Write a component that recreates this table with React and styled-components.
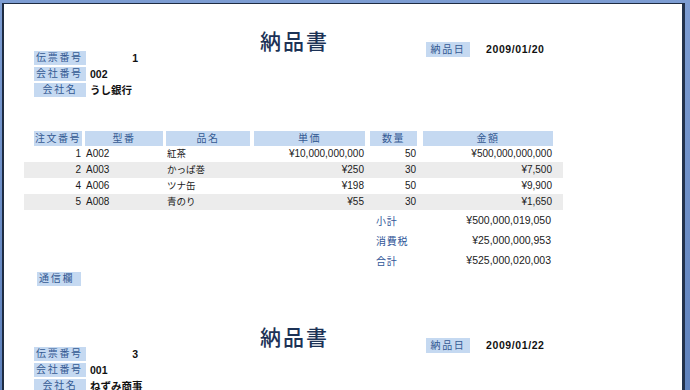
import React from "react";
import styled, { createGlobalStyle } from "styled-components";

const GlobalStyle = createGlobalStyle`
  html, body { margin: 0; padding: 0; }
  body {
    background: #6d8fc8;
    font-family: "Liberation Sans", "Noto Sans CJK JP", sans-serif;
    overflow: hidden;
  }
`;

const Frame = styled.div`
  height: 390px;
  box-sizing: border-box;
  padding: 3px 5px 0 2px;
  background: linear-gradient(#7d9dd3, #5f82bd);
`;

const Sheet = styled.div`
  height: 100%;
  box-sizing: border-box;
  background: #fff;
  border-left: 2px solid #1e2c42;
  border-top: 1px solid #1e2c42;
  border-right: 3px solid #22324c;
  overflow: hidden;
`;

const Section = styled.section`
  height: 296px;
  width: 539px;
  padding-left: 20px;
  display: flex;
  flex-direction: column;
`;

const Header = styled.div`
  display: grid;
  grid-template-columns: 200px 139px 200px;
  grid-template-rows: 47px auto;
`;

const Title = styled.h1`
  grid-column: 2;
  grid-row: 1;
  margin: 0;
  padding: 24px 0 0 2px;
  font: 500 21px/24px "Noto Sans CJK JP", sans-serif;
  letter-spacing: 2px;
  text-align: center;
  color: #1c3256;
  white-space: nowrap;
`;

const DateBlock = styled.div`
  grid-column: 3;
  grid-row: 1 / 3;
  align-self: start;
  margin: 38px 0 0 63px;
  display: flex;
  align-items: center;
  gap: 16px;
`;

const Label = styled.div`
  width: ${(p) => p.$w || 52}px;
  height: ${(p) => p.$h || 14}px;
  box-sizing: border-box;
  padding: ${(p) => (p.$align === "left" ? "0 0 0 2px" : "0")};
  background: #c5d9f1;
  color: #345a93;
  font-size: 10px;
  line-height: ${(p) => p.$h || 14}px;
  letter-spacing: 1.7px;
  text-align: ${(p) => p.$align || "center"};
  white-space: nowrap;
`;

const Value = styled.div`
  font-size: 10.5px;
  font-weight: 700;
  line-height: ${(p) => p.$h || 14}px;
  color: #111;
  letter-spacing: ${(p) => p.$ls || 0}px;
  text-align: ${(p) => p.$align || "left"};
  white-space: nowrap;
`;

const Info = styled.div`
  grid-column: 1 / 3;
  grid-row: 2;
  padding-left: 10px;
  display: grid;
  grid-template-columns: 52px 48px;
  grid-auto-rows: 14px;
  column-gap: 4px;
  row-gap: 2px;
`;

const Table = styled.div`
  margin-top: 34px;
  display: flex;
  flex-direction: column;
`;

const Row = styled.div`
  display: grid;
  grid-template-columns: 51px 81px 88px 116px 53px 130px;
  padding: 0 10px;
  height: ${(p) => (p.$head ? 15 : 16)}px;
  background: ${(p) => (p.$shade ? "#ececec" : "#fff")};
`;

const HeadCell = styled.div`
  margin-right: ${(p) => p.$gap}px;
  background: #c5d9f1;
  color: #345a93;
  font-size: 10px;
  line-height: 15px;
  letter-spacing: 1.5px;
  text-align: center;
  white-space: nowrap;
`;

const Cell = styled.div`
  margin-right: ${(p) => p.$gap}px;
  padding: 0 1px;
  font-size: ${(p) => p.$size || 10}px;
  line-height: 16px;
  color: #1b1b1b;
  text-align: ${(p) => p.$align};
  white-space: nowrap;
`;

const Totals = styled.div`
  margin-left: 352px;
  width: 175px;
  display: grid;
  grid-template-columns: auto 1fr;
  grid-auto-rows: 20px;
  align-items: center;
`;

const TotalLabel = styled.div`
  color: #2f5597;
  font-size: 10px;
  letter-spacing: 0.7px;
`;

const TotalValue = styled.div`
  color: #1b1b1b;
  font-size: 10.5px;
  text-align: right;
`;

const Memo = styled(Label)`
  margin: 2px 0 0 13px;
`;

const columns = [
  { key: "no", title: "注文番号", gap: 3, align: "right" },
  { key: "code", title: "型番", gap: 3, align: "left" },
  { key: "name", title: "品名", gap: 4, align: "left", size: 9.5 },
  { key: "price", title: "単価", gap: 5, align: "right" },
  { key: "qty", title: "数量", gap: 6, align: "right" },
  { key: "amount", title: "金額", gap: 0, align: "right" },
];

const pages = [
  {
    slip: "1",
    company: "002",
    name: "うし銀行",
    date: "2009/01/20",
    rows: [
      { no: "1", code: "A002", name: "紅茶", price: "¥10,000,000,000", qty: "50", amount: "¥500,000,000,000" },
      { no: "2", code: "A003", name: "かっぱ巻", price: "¥250", qty: "30", amount: "¥7,500" },
      { no: "4", code: "A006", name: "ツナ缶", price: "¥198", qty: "50", amount: "¥9,900" },
      { no: "5", code: "A008", name: "青のり", price: "¥55", qty: "30", amount: "¥1,650" },
    ],
    totals: [
      ["小計", "¥500,000,019,050"],
      ["消費税", "¥25,000,000,953"],
      ["合計", "¥525,000,020,003"],
    ],
  },
  {
    slip: "3",
    company: "001",
    name: "ねずみ商事",
    date: "2009/01/22",
    rows: [
      { no: "3", code: "A001", name: "緑茶", price: "¥120", qty: "10", amount: "¥1,200" },
      { no: "6", code: "A004", name: "鉄火巻", price: "¥300", qty: "20", amount: "¥6,000" },
    ],
    totals: [
      ["小計", "¥7,200"],
      ["消費税", "¥360"],
      ["合計", "¥7,560"],
    ],
  },
];

function Report({ page }) {
  return (
    <Section>
      <Header>
        <Title>納品書</Title>
        <DateBlock>
          <Label $w={44} $h={15}>納品日</Label>
          <Value $h={15} $ls={0.6}>{page.date}</Value>
        </DateBlock>
        <Info>
          <Label $align="left">伝票番号</Label>
          <Value $align="right">{page.slip}</Value>
          <Label $align="left">会社番号</Label>
          <Value>{page.company}</Value>
          <Label>会社名</Label>
          <Value>{page.name}</Value>
        </Info>
      </Header>
      <Table>
        <Row $head>
          {columns.map((c) => (
            <HeadCell key={c.key} $gap={c.gap}>{c.title}</HeadCell>
          ))}
        </Row>
        {page.rows.map((r, i) => (
          <Row key={r.no} $shade={i % 2 === 1}>
            {columns.map((c) => (
              <Cell key={c.key} $gap={c.gap} $align={c.align} $size={c.size}>
                {r[c.key]}
              </Cell>
            ))}
          </Row>
        ))}
      </Table>
      <Totals>
        {page.totals.map(([l, v]) => (
          <React.Fragment key={l}>
            <TotalLabel>{l}</TotalLabel>
            <TotalValue>{v}</TotalValue>
          </React.Fragment>
        ))}
      </Totals>
      <Memo $w={44} $align="left">通信欄</Memo>
    </Section>
  );
}

export default function App() {
  return (
    <>
      <GlobalStyle />
      <Frame>
        <Sheet>
          {pages.map((p) => (
            <Report key={p.slip} page={p} />
          ))}
        </Sheet>
      </Frame>
    </>
  );
}
